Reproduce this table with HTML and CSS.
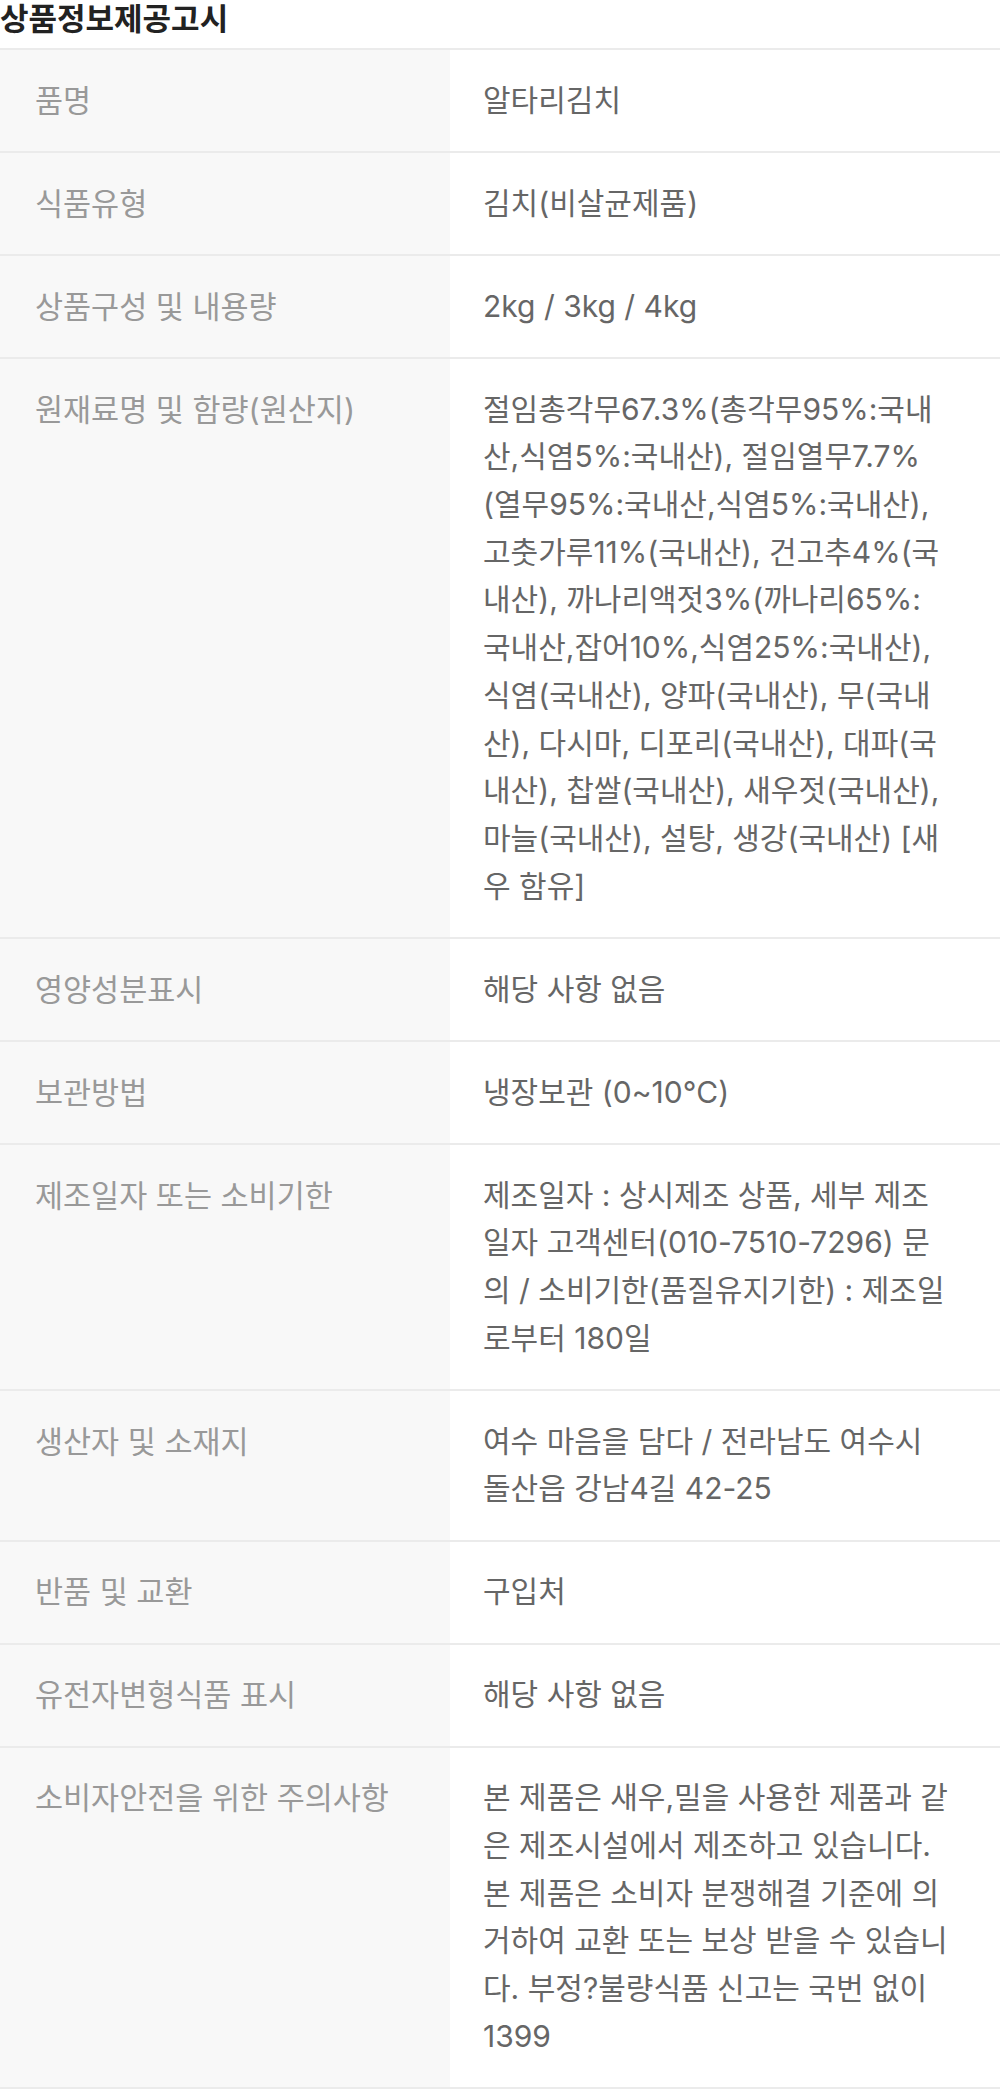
FILE: index.html
```html
<!DOCTYPE html>
<html lang="ko">
<head>
  <meta charset="UTF-8">
  <meta name="viewport" content="width=device-width, initial-scale=1.0">
  <title>상품정보제공고시</title>
  <link rel="stylesheet" href="styles.css">
</head>
<body>
  <div class="notice">
    <h3 class="notice-title">상품정보제공고시</h3>
    <table class="notice-table">
      <tr>
        <th>품명</th>
        <td>알타리김치</td>
      </tr>
      <tr>
        <th>식품유형</th>
        <td>김치(비살균제품)</td>
      </tr>
      <tr>
        <th>상품구성 및 내용량</th>
        <td>2kg / 3kg / 4kg</td>
      </tr>
      <tr>
        <th>원재료명 및 함량(원산지)</th>
        <td>절임총각무67.3%(총각무95%:국내<br>산,식염5%:국내산), 절임열무7.7%<br>(열무95%:국내산,식염5%:국내산),<br>고춧가루11%(국내산), 건고추4%(국<br>내산), 까나리액젓3%(까나리65%:<br>국내산,잡어10%,식염25%:국내산),<br>식염(국내산), 양파(국내산), 무(국내<br>산), 다시마, 디포리(국내산), 대파(국<br>내산), 찹쌀(국내산), 새우젓(국내산),<br>마늘(국내산), 설탕, 생강(국내산) [새<br>우 함유]</td>
      </tr>
      <tr>
        <th>영양성분표시</th>
        <td>해당 사항 없음</td>
      </tr>
      <tr>
        <th>보관방법</th>
        <td>냉장보관 (0~10°C)</td>
      </tr>
      <tr>
        <th>제조일자 또는 소비기한</th>
        <td>제조일자 : 상시제조 상품, 세부 제조<br>일자 고객센터(010-7510-7296) 문<br>의 / 소비기한(품질유지기한) : 제조일<br>로부터 180일</td>
      </tr>
      <tr>
        <th>생산자 및 소재지</th>
        <td>여수 마음을 담다 / 전라남도 여수시<br>돌산읍 강남4길 42-25</td>
      </tr>
      <tr>
        <th>반품 및 교환</th>
        <td>구입처</td>
      </tr>
      <tr>
        <th>유전자변형식품 표시</th>
        <td>해당 사항 없음</td>
      </tr>
      <tr>
        <th>소비자안전을 위한 주의사항</th>
        <td>본 제품은 새우,밀을 사용한 제품과 같<br>은 제조시설에서 제조하고 있습니다.<br>본 제품은 소비자 분쟁해결 기준에 의<br>거하여 교환 또는 보상 받을 수 있습니<br>다. 부정?불량식품 신고는 국번 없이<br>1399</td>
      </tr>
    </table>
  </div>
</body>
</html>
```

FILE: styles.css
```css
/* General Styles */
body {
  margin: 0;
  padding: 0;
  background: #fff;
  font-family: Inter, "Noto Sans CJK KR", sans-serif;
}

.notice-title {
  margin: 0;
  height: 48px;
  font-size: 31px;
  line-height: 37px;
  font-weight: 700;
  color: #222;
}

/* Table */
.notice-table {
  width: 100%;
  border-collapse: collapse;
  border-top: 2px solid #ebebeb;
}

.notice-table th,
.notice-table td {
  font-size: 30px;
  line-height: 47.7px;
  font-weight: 400;
  text-align: left;
  vertical-align: top;
  border-bottom: 2px solid #ebebeb;
}

.notice-table th {
  width: 380px;
  padding: 26.7px 35px 26.6px 35px;
  background: #f8f8f8;
  color: #999;
  font-size: 30.5px;
  white-space: nowrap;
}

.notice-table td {
  padding: 26.7px 18px 26.6px 33px;
  color: #666;
}
```
